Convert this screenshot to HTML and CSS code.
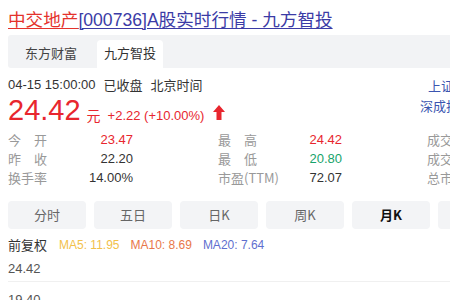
FILE: index.html
```html
<!DOCTYPE html>
<html lang="zh">
<head>
<meta charset="utf-8">
<link rel="stylesheet" href="styles.css">
</head>
<body>
<div class="page">
  <h1 class="title"><a class="t-red" href="#">中交地产</a><a class="t-blue" href="#">[000736]A股实时行情 - 九方智投</a></h1>
  <div class="tabs">
    <div class="tab">东方财富</div>
    <div class="tab active">九方智投</div>
  </div>
  <div class="head">
    <div class="head-left">
      <div class="time"><span>04-15 15:00:00</span><span>已收盘</span><span>北京时间</span></div>
      <div class="price-row">
        <span class="price">24.42</span>
        <span class="unit">元</span>
        <span class="change">+2.22 (+10.00%)</span>
        <svg class="arrow" width="12" height="15" viewBox="0 0 12 15"><path d="M6 0 L12 7 L8.5 7 L8.5 15 L3.5 15 L3.5 7 L0 7 Z" fill="#e8262e"/></svg>
      </div>
    </div>
    <div class="indices">
      <div class="idx idx-1">上证指数</div>
      <div class="idx">深成指数</div>
    </div>
  </div>
  <div class="stats">
    <div class="grp">
      <span class="lbl j">今开</span><span class="val red">23.47</span>
      <span class="lbl j">昨收</span><span class="val">22.20</span>
      <span class="lbl j">换手率</span><span class="val">14.00%</span>
    </div>
    <div class="grp">
      <span class="lbl j">最高</span><span class="val red">24.42</span>
      <span class="lbl j">最低</span><span class="val green">20.80</span>
      <span class="lbl">市盈(TTM)</span><span class="val">72.07</span>
    </div>
    <div class="grp">
      <span class="lbl">成交量</span><span class="val">23.1万</span>
      <span class="lbl">成交额</span><span class="val">5.4亿</span>
      <span class="lbl">总市值</span><span class="val">181亿</span>
    </div>
  </div>
  <div class="periods">
    <div class="pbtn">分时</div>
    <div class="pbtn">五日</div>
    <div class="pbtn">日K</div>
    <div class="pbtn">周K</div>
    <div class="pbtn on">月K</div>
    <div class="pbtn">分钟</div>
  </div>
  <div class="ma"><span class="fq">前复权</span><span class="ma5">MA5: 11.95</span><span class="ma10">MA10: 8.69</span><span class="ma20">MA20: 7.64</span></div>
  <div class="axis">24.42</div>
  <div class="axis second">19.40</div>
</div>
</body>
</html>
```

FILE: styles.css
```css
html, body {
  margin: 0;
  padding: 0;
  overflow: hidden;
  background: #fff;
}
body {
  width: 450px;
  height: 300px;
  font-family: "Liberation Sans", "Noto Sans CJK SC", sans-serif;
  color: #333;
}
.page {
  width: 620px;
  padding: 0 0 0 8px;
}
.title {
  margin: 0;
  padding-top: 8px;
  font-size: 17.6px;
  font-weight: normal;
  line-height: 24px;
  white-space: nowrap;
}
.title a { text-decoration: underline; text-underline-offset: 2px; text-decoration-thickness: 1px; }
.t-red { color: #e4322b; }
.t-blue { color: #3b3ba6; }
.tabs {
  margin-top: 3px;
  height: 33px;
  background: #f2f3f5;
  display: flex;
  align-items: flex-end;
  padding-left: 10px;
  gap: 13px;
  border-radius: 3px 0 0 3px;
}
.tab {
  height: 28px;
  line-height: 26px;
  padding: 0 7px;
  font-size: 13px;
  color: #444;
  font-family: "Noto Sans CJK SC", sans-serif;
}
.tab.active {
  background: #fff;
  border-radius: 4px 4px 0 0;
  color: #333;
}
.head {
  display: flex;
}
.head-left {
  width: 412px;
}
.time {
  margin-top: 8px;
  font-size: 13px;
  line-height: 18px;
  color: #333;
  display: flex;
  gap: 8px;
}
.time span:not(:first-child) { font-family: "Noto Sans CJK SC", sans-serif; }
.price-row {
  display: flex;
  align-items: baseline;
  height: 30px;
  color: #e8262e;
  margin-top: 1px;
}
.price {
  font-size: 29px;
  line-height: 30px;
}
.unit {
  font-size: 14px;
  margin-left: 6px;
  font-family: "Noto Sans CJK SC", sans-serif;
  position: relative;
  top: 1px;
}
.change {
  font-size: 13px;
  margin-left: 7px;
}
.arrow {
  margin-left: 9px;
  align-self: center;
  position: relative;
  top: 2px;
}
.indices {
  margin-top: 8px;
  font-size: 13px;
  line-height: 20px;
  color: #3b55b0;
  font-family: "Noto Sans CJK SC", sans-serif;
  white-space: nowrap;
}
.idx-1 { padding-left: 8px; }
.stats {
  display: flex;
  gap: 85px;
  margin-top: 5px;
  font-size: 13px;
}
.grp {
  display: grid;
  grid-template-columns: 39px 86px;
  column-gap: 0;
  grid-auto-rows: 19px;
  line-height: 19px;
  white-space: nowrap;
}
.grp .lbl {
  color: #999;
  font-family: "Noto Sans CJK SC", sans-serif;
}
.grp .lbl.j {
  text-align: justify;
  text-align-last: justify;
}
.grp .val {
  text-align: right;
  color: #333;
}
.grp:nth-child(2) { grid-template-columns: 39px 85px; }
.val.red { color: #e8262e; }
.val.green { color: #17a36a; }
.periods {
  display: flex;
  gap: 8px;
  margin-top: 14px;
}
.pbtn {
  flex: 0 0 78px;
  height: 28px;
  line-height: 28px;
  text-align: center;
  background: #f3f4f6;
  border-radius: 4px;
  font-size: 13px;
  color: #666;
  font-family: "Noto Sans CJK SC", sans-serif;
}
.pbtn.on { color: #111; font-weight: bold; }
.ma {
  margin-top: 6px;
  height: 20px;
  line-height: 20px;
  font-size: 12px;
  display: flex;
  gap: 11px;
  white-space: nowrap;
}
.ma .fq { font-size: 13px; color: #333; font-family: "Noto Sans CJK SC", sans-serif; margin-right: 1px; }
.ma5 { color: #f2c14a; }
.ma10 { color: #e8774a; }
.ma20 { color: #5f6fcf; }
.axis {
  font-size: 13px;
  color: #555;
  line-height: 20px;
  margin-top: 4px;
  padding-bottom: 2px;
  border-bottom: 1px solid #f0f0f0;
}
.axis.second {
  margin-top: 8px;
  border-bottom: none;
}
```
